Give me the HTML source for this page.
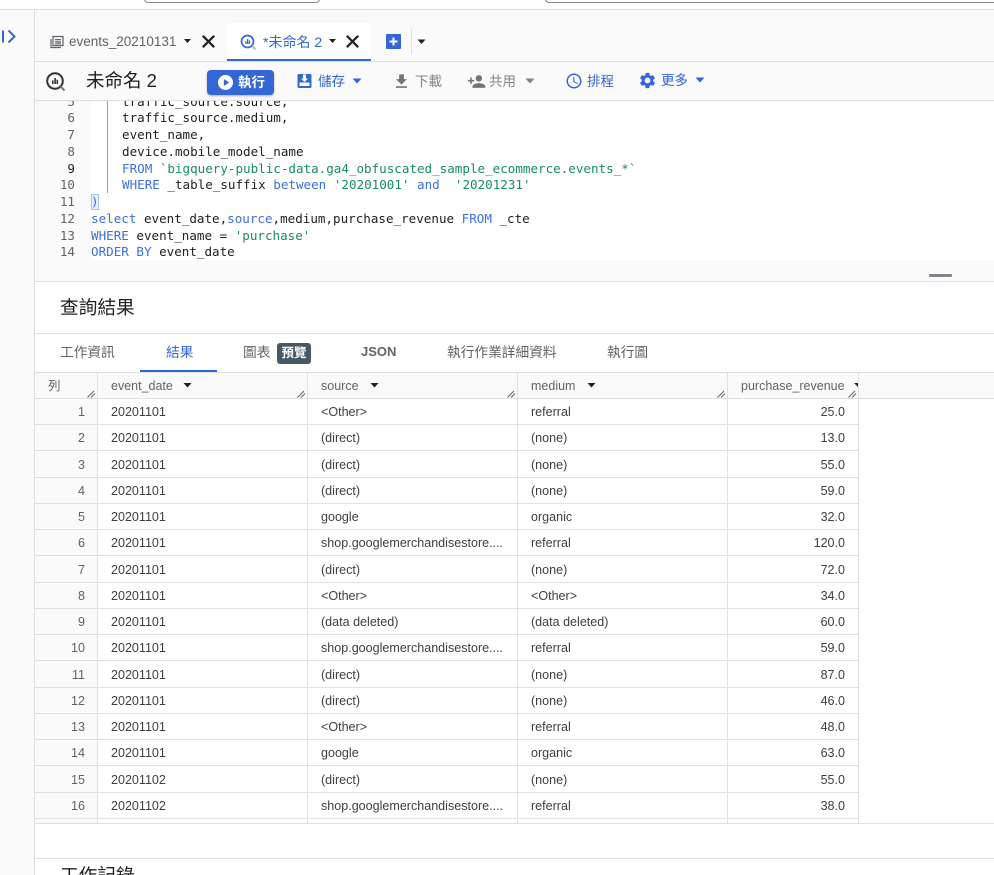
<!DOCTYPE html>
<html lang="zh-Hant"><head><meta charset="utf-8"><title>BigQuery</title>
<style>
*{box-sizing:border-box}
html,body{margin:0;padding:0;width:994px;height:875px;overflow:hidden;background:#fff}
body{position:relative;font-family:"Liberation Sans","Noto Sans CJK TC",sans-serif;color:#3c4043}
.a{position:absolute;white-space:nowrap}
.ln{position:absolute;background:#e0e0e0;height:1px}
.vl{position:absolute;background:#e0e0e0;width:1px}
svg{position:absolute;display:block}
.blue{color:#3367d6}.gray{color:#80868b}
.code{position:absolute;left:0;height:17px;line-height:17px;white-space:pre;font-family:"DejaVu Sans Mono","Liberation Mono",monospace;font-size:12.57px;color:#202124}
.n{position:absolute;left:35px;width:40px;text-align:right;height:17px;line-height:17px;font-family:"DejaVu Sans Mono","Liberation Mono",monospace;font-size:12.57px;color:#5f6368}
.k{color:#3b6fdc}.s{color:#188a6a}
.tb{font-size:13.5px;line-height:18px}
.r{position:absolute;left:35px;width:824px;height:27px;border-bottom:1px solid #e0e0e0;font-size:12.55px;color:#3c4043}
.r b{position:absolute;left:0;top:2px;width:63px;height:25px;font-weight:400;color:#5f6368;text-align:right;padding-right:13px;line-height:25px}
.r i{position:absolute;font-style:normal;top:2px;line-height:25px;white-space:nowrap}
.c1{left:76px}.c2{left:286px}.c3{left:496px}.c4{left:693px;width:117px;text-align:right}
.hd{font-size:12.5px;color:#5f6368;line-height:18px}
</style></head><body>

<!-- top strip -->
<div class="a" style="left:144px;top:-8px;width:176px;height:11px;border:1px solid #80868b;border-radius:4px;background:#fff"></div>
<div class="a" style="left:545px;top:-8px;width:460px;height:11px;border:1px solid #80868b;border-radius:4px;background:#fff"></div>
<div class="ln" style="left:0;top:9px;width:994px"></div>

<!-- sidebar -->
<div class="a" style="left:0;top:10px;width:34px;height:865px;background:#fafafa"></div>
<div class="vl" style="left:34px;top:10px;height:865px;background:#dadce0"></div>
<svg style="left:1px;top:29px" width="16" height="15" viewBox="0 0 16 15"><path d="M1 1.500h2v12H1z" fill="#3367d6"/><path d="M7.500 1.500l6 6-6 6" fill="none" stroke="#3367d6" stroke-width="2"/></svg>

<!-- tab bar -->
<div class="a" style="left:35px;top:10px;width:959px;height:51px;background:#fafafa"></div>
<div class="ln" style="left:35px;top:61px;width:959px"></div>
<svg style="left:50px;top:35px" width="14" height="14" viewBox="0 0 14 14"><path d="M3 1.500h10v9H3z" fill="none" stroke="#5f6368" stroke-width="1.200"/><path d="M1 4v8.500h10" fill="none" stroke="#5f6368" stroke-width="1.200"/><path d="M5 4h6v1.300H5zM5 6.300h6v1.300H5zM5 8.300h6v1H5z" fill="#5f6368"/></svg>
<div class="a" style="left:69px;top:33px;font-size:13.5px;line-height:18px;color:#5f6368">events_20210131</div>
<svg style="left:183px;top:38px" width="9" height="6"><path d="M1 1h7L4.500 5z" fill="#202124"/></svg>
<svg style="left:198px;top:31px" width="21" height="21" viewBox="0 0 24 24"><path d="M19 6.410L17.590 5 12 10.590 6.410 5 5 6.410 10.590 12 5 17.590 6.410 19 12 13.410 17.590 19 19 17.590 13.410 12z" fill="#202124" stroke="#202124" stroke-width=".6"/></svg>

<div class="a" style="left:227px;top:23px;width:144px;height:38px;background:#fff;border-radius:4px 4px 0 0;border-bottom:2px solid #3367d6"></div>
<svg style="left:240px;top:34px" width="17" height="17" viewBox="0 0 17 17"><circle cx="7.500" cy="7.500" r="6" fill="none" stroke="#3367d6" stroke-width="1.700"/><path d="M11.800 11.800l3.700 3.700" stroke="#9ab4ea" stroke-width="1.800"/><path d="M5.300 7h1.300v3H5.300zM7 5h1.300v5H7zM8.800 6.500h1.300V10H8.800z" fill="#3367d6"/></svg>
<div class="a blue" style="left:263px;top:33px;font-size:14px;line-height:19px">*未命名 2</div>
<svg style="left:328px;top:38px" width="9" height="6"><path d="M1 1h7L4.500 5z" fill="#202124"/></svg>
<svg style="left:342px;top:31px" width="21" height="21" viewBox="0 0 24 24"><path d="M19 6.410L17.590 5 12 10.590 6.410 5 5 6.410 10.590 12 5 17.590 6.410 19 12 13.410 17.590 19 19 17.590 13.410 12z" fill="#202124" stroke="#202124" stroke-width=".6"/></svg>
<div class="a" style="left:386px;top:34px;width:15px;height:15px;background:#3367d6;border-radius:1px"></div>
<svg style="left:386px;top:34px" width="15" height="15"><path d="M6.500 3.500h2v3h3v2h-3v3h-2v-3h-3v-2h3z" fill="#fff"/></svg>
<div class="vl" style="left:411px;top:29px;height:25px"></div>
<svg style="left:417px;top:39px" width="9" height="6"><path d="M0.500 0.500h8L4.500 5z" fill="#202124"/></svg>

<!-- toolbar -->
<div class="a" style="left:35px;top:62px;width:959px;height:38px;background:#fafafa"></div>
<div class="ln" style="left:35px;top:100px;width:959px;background:#dcdcdc"></div>
<svg style="left:45px;top:71px" width="21" height="21" viewBox="0 0 21 21"><circle cx="10" cy="10" r="7.800" fill="none" stroke="#303336" stroke-width="2"/><path d="M15.500 15.500l4 4" stroke="#777" stroke-width="2"/><path d="M7 9.500h1.600v3.500H7zM9.300 7h1.600v6H9.300zM11.500 8.800h1.600V13h-1.600z" fill="#303336"/></svg>
<div class="a" style="left:86px;top:68px;font-size:18.5px;line-height:25px;color:#202124">未命名 2</div>
<div class="a" style="left:207px;top:70px;width:67px;height:25px;background:#3367d6;border-radius:4px;box-shadow:0 1px 2px rgba(0,0,0,.3)"></div>
<svg style="left:218px;top:75px" width="15" height="15"><circle cx="7.500" cy="7.500" r="7.500" fill="#fff"/><path d="M5.800 4v7l5.400-3.500z" fill="#3367d6"/></svg>
<div class="a tb" style="left:238px;top:74px;color:#fff;font-weight:700">執行</div>
<svg style="left:297px;top:73px" width="15" height="16" viewBox="0 0 15 16"><path d="M2 1h11a1.500 1.500 0 011.500 1.500v11A1.500 1.500 0 0113 15H2a1.500 1.500 0 01-1.500-1.500v-11A1.500 1.500 0 012 1z" fill="#3367d6"/><path d="M2.500 9.500h10V13h-10z" fill="#fff"/><path d="M6 1.500h3v4h2l-3.500 3.500L4 5.500h2z" fill="#fff"/></svg>
<div class="a tb blue" style="left:318px;top:73px">儲存</div>
<svg style="left:352px;top:78px" width="10" height="6"><path d="M0.500 0.500h9L5 5.500z" fill="#3367d6"/></svg>
<svg style="left:392px;top:72px" width="19" height="19" viewBox="0 0 24 24"><path d="M19 9h-4V3H9v6H5l7 7 7-7zM5 18v2h14v-2H5z" fill="#757575"/></svg>
<div class="a tb" style="left:415px;top:73px;color:#80868b">下載</div>
<svg style="left:467px;top:72px" width="19" height="19" viewBox="0 0 24 24"><path d="M15 12c2.210 0 4-1.790 4-4s-1.790-4-4-4-4 1.790-4 4 1.790 4 4 4zm-9-2V7H4v3H1v2h3v3h2v-3h3v-2H6zm9 4c-2.670 0-8 1.340-8 4v2h16v-2c0-2.660-5.330-4-8-4z" fill="#757575"/></svg>
<div class="a tb" style="left:489px;top:73px;color:#80868b">共用</div>
<svg style="left:525px;top:78px" width="10" height="6"><path d="M0.500 0.500h9L5 5.500z" fill="#80868b"/></svg>
<svg style="left:565px;top:72px" width="18" height="18" viewBox="0 0 24 24"><path d="M11.990 2C6.470 2 2 6.480 2 12s4.470 10 9.990 10C17.520 22 22 17.520 22 12S17.520 2 11.990 2zM12 20c-4.420 0-8-3.580-8-8s3.580-8 8-8 8 3.580 8 8-3.580 8-8 8zm.5-13H11v6l5.250 3.150.75-1.230-4.500-2.670z" fill="#3367d6"/></svg>
<div class="a tb blue" style="left:587px;top:73px">排程</div>
<svg style="left:638px;top:71px" width="19" height="19" viewBox="0 0 24 24"><path d="M19.140 12.940c.04-.3.060-.61.060-.94 0-.32-.02-.64-.07-.94l2.030-1.580c.18-.14.23-.41.12-.61l-1.920-3.320c-.12-.22-.37-.29-.59-.22l-2.390.96c-.5-.38-1.030-.7-1.620-.94l-.36-2.540c-.04-.24-.24-.41-.48-.41h-3.840c-.24 0-.43.17-.47.41l-.36 2.540c-.59.24-1.130.57-1.620.94l-2.390-.96c-.22-.08-.47 0-.59.22L2.740 8.870c-.12.21-.08.47.12.61l2.030 1.580c-.05.3-.09.63-.09.94s.02.64.07.94l-2.030 1.580c-.18.14-.23.41-.12.61l1.920 3.320c.12.22.37.29.59.22l2.390-.96c.5.38 1.030.7 1.620.94l.36 2.540c.05.24.24.41.48.41h3.840c.24 0 .44-.17.47-.41l.36-2.540c.59-.24 1.130-.56 1.620-.94l2.390.96c.22.08.47 0 .59-.22l1.920-3.320c.12-.22.07-.47-.12-.61l-2.010-1.580zM12 15.600c-1.980 0-3.600-1.620-3.600-3.600s1.620-3.600 3.600-3.600 3.600 1.620 3.600 3.600-1.620 3.600-3.600 3.600z" fill="#3367d6"/></svg>
<div class="a tb blue" style="left:661px;top:72px">更多</div>
<svg style="left:695px;top:77px" width="10" height="6"><path d="M0.500 0.500h9L5 5.500z" fill="#3367d6"/></svg>

<!-- editor -->
<div class="a" style="left:35px;top:101px;width:56px;height:159px;background:#fafafa"></div>
<div class="a" style="left:35px;top:260px;width:959px;height:21px;background:#fafafa"></div>
<div class="a" style="left:35px;top:101px;width:959px;height:159px;overflow:hidden">
  <div class="n" style="left:0;top:-8px">5</div>
  <div class="n" style="left:0;top:8px">6</div>
  <div class="n" style="left:0;top:25px">7</div>
  <div class="n" style="left:0;top:42px">8</div>
  <div class="n" style="left:0;top:59px;color:#202124">9</div>
  <div class="n" style="left:0;top:75px">10</div>
  <div class="n" style="left:0;top:92px">11</div>
  <div class="n" style="left:0;top:109px">12</div>
  <div class="n" style="left:0;top:126px">13</div>
  <div class="n" style="left:0;top:142px">14</div>
  <div class="a" style="left:72px;top:0;width:1px;height:92px;background:#9e9e9e"></div>
  <div class="a" style="left:56px;top:93px;width:8px;height:16px;background:#e8f0fe;border:1px solid #a8c4f5"></div>
  <div class="code" style="left:87px;top:-8px">traffic_source.source,</div>
  <div class="code" style="left:87px;top:8px">traffic_source.medium,</div>
  <div class="code" style="left:87px;top:25px">event_name,</div>
  <div class="code" style="left:87px;top:42px">device.mobile_model_name</div>
  <div class="code" style="left:87px;top:59px"><span class="k">FROM</span> <span class="s">`bigquery-public-data.ga4_obfuscated_sample_ecommerce.events_*`</span></div>
  <div class="code" style="left:87px;top:75px"><span class="k">WHERE</span> _table_suffix <span class="k">between</span> <span class="s">'20201001'</span> <span class="k">and</span>  <span class="s">'20201231'</span></div>
  <div class="code k" style="left:56px;top:92px">)</div>
  <div class="code" style="left:56px;top:109px"><span class="k">select</span> event_date,<span class="k">source</span>,medium,purchase_revenue <span class="k">FROM</span> _cte</div>
  <div class="code" style="left:56px;top:126px"><span class="k">WHERE</span> event_name = <span class="s">'purchase'</span></div>
  <div class="code" style="left:56px;top:142px"><span class="k">ORDER BY</span> event_date</div>
</div>
<div class="a" style="left:929px;top:274px;width:23px;height:3px;background:#80868b;border-radius:1px"></div>
<div class="ln" style="left:35px;top:281px;width:959px"></div>

<!-- results title -->
<div class="a" style="left:60px;top:295px;font-size:18.700px;line-height:26px;color:#202124">查詢結果</div>
<div class="ln" style="left:35px;top:333px;width:959px"></div>

<!-- results tabs -->
<div class="a tb" style="left:60px;top:344px;font-size:13.700px;color:#5f6368">工作資訊</div>
<div class="a tb blue" style="left:166px;top:344px;font-size:13.700px">結果</div>
<div class="a" style="left:140px;top:370px;width:77px;height:2px;background:#3367d6"></div>
<div class="a tb" style="left:243px;top:344px;font-size:13.700px;color:#5f6368">圖表</div>
<div class="a" style="left:277px;top:343px;width:34px;height:21px;background:#455a64;border-radius:3px;color:#fff;font-size:12.500px;line-height:21px;text-align:center;font-weight:700">預覽</div>
<div class="a" style="left:361px;top:343px;font-size:13px;line-height:18px;color:#5f6368;font-weight:700">JSON</div>
<div class="a tb" style="left:447px;top:344px;font-size:13.700px;color:#5f6368">執行作業詳細資料</div>
<div class="a tb" style="left:607px;top:344px;font-size:13.700px;color:#5f6368">執行圖</div>
<div class="ln" style="left:35px;top:372px;width:959px"></div>

<!-- table header -->
<div class="a" style="left:35px;top:373px;width:959px;height:25px;background:#fafafa"></div>
<div class="a" style="left:35px;top:399px;width:62px;height:424px;background:#fafafa"></div>
<div class="ln" style="left:35px;top:398px;width:959px"></div>
<div class="a hd" style="left:48px;top:377px">列</div>
<div class="a hd" style="left:111px;top:377px">event_date</div>
<svg style="left:183px;top:383px" width="9" height="5"><path d="M0.500 0h8L4.500 4.500z" fill="#202124"/></svg>
<div class="a hd" style="left:321px;top:377px">source</div>
<svg style="left:370px;top:383px" width="9" height="5"><path d="M0.500 0h8L4.500 4.500z" fill="#202124"/></svg>
<div class="a hd" style="left:531px;top:377px">medium</div>
<svg style="left:587px;top:383px" width="9" height="5"><path d="M0.500 0h8L4.500 4.500z" fill="#202124"/></svg>
<div class="a hd" style="left:741px;top:377px">purchase_revenue</div>
<svg style="left:854px;top:383px" width="4" height="4"><path d="M0 0h4v4z" fill="#202124"/></svg>
<svg style="left:87px;top:390px" width="9" height="8"><path d="M0.500 7.500L7 1M4 7.500L8 3.500" stroke="#5f6368" stroke-width="1"/></svg>
<svg style="left:297px;top:390px" width="9" height="8"><path d="M0.500 7.500L7 1M4 7.500L8 3.500" stroke="#5f6368" stroke-width="1"/></svg>
<svg style="left:507px;top:390px" width="9" height="8"><path d="M0.500 7.500L7 1M4 7.500L8 3.500" stroke="#5f6368" stroke-width="1"/></svg>
<svg style="left:717px;top:390px" width="9" height="8"><path d="M0.500 7.500L7 1M4 7.500L8 3.500" stroke="#5f6368" stroke-width="1"/></svg>
<svg style="left:848px;top:390px" width="9" height="8"><path d="M0.500 7.500L7 1M4 7.500L8 3.500" stroke="#5f6368" stroke-width="1"/></svg>

<!-- table rows -->
<div class="r" style="top:398px"><b>1</b><i class="c1">20201101</i><i class="c2">&lt;Other&gt;</i><i class="c3">referral</i><i class="c4">25.0</i></div>
<div class="r" style="top:424px"><b>2</b><i class="c1">20201101</i><i class="c2">(direct)</i><i class="c3">(none)</i><i class="c4">13.0</i></div>
<div class="r" style="top:451px"><b>3</b><i class="c1">20201101</i><i class="c2">(direct)</i><i class="c3">(none)</i><i class="c4">55.0</i></div>
<div class="r" style="top:477px"><b>4</b><i class="c1">20201101</i><i class="c2">(direct)</i><i class="c3">(none)</i><i class="c4">59.0</i></div>
<div class="r" style="top:503px"><b>5</b><i class="c1">20201101</i><i class="c2">google</i><i class="c3">organic</i><i class="c4">32.0</i></div>
<div class="r" style="top:529px"><b>6</b><i class="c1">20201101</i><i class="c2">shop.googlemerchandisestore....</i><i class="c3">referral</i><i class="c4">120.0</i></div>
<div class="r" style="top:556px"><b>7</b><i class="c1">20201101</i><i class="c2">(direct)</i><i class="c3">(none)</i><i class="c4">72.0</i></div>
<div class="r" style="top:582px"><b>8</b><i class="c1">20201101</i><i class="c2">&lt;Other&gt;</i><i class="c3">&lt;Other&gt;</i><i class="c4">34.0</i></div>
<div class="r" style="top:608px"><b>9</b><i class="c1">20201101</i><i class="c2">(data deleted)</i><i class="c3">(data deleted)</i><i class="c4">60.0</i></div>
<div class="r" style="top:634px"><b>10</b><i class="c1">20201101</i><i class="c2">shop.googlemerchandisestore....</i><i class="c3">referral</i><i class="c4">59.0</i></div>
<div class="r" style="top:661px"><b>11</b><i class="c1">20201101</i><i class="c2">(direct)</i><i class="c3">(none)</i><i class="c4">87.0</i></div>
<div class="r" style="top:687px"><b>12</b><i class="c1">20201101</i><i class="c2">(direct)</i><i class="c3">(none)</i><i class="c4">46.0</i></div>
<div class="r" style="top:713px"><b>13</b><i class="c1">20201101</i><i class="c2">&lt;Other&gt;</i><i class="c3">referral</i><i class="c4">48.0</i></div>
<div class="r" style="top:739px"><b>14</b><i class="c1">20201101</i><i class="c2">google</i><i class="c3">organic</i><i class="c4">63.0</i></div>
<div class="r" style="top:766px"><b>15</b><i class="c1">20201102</i><i class="c2">(direct)</i><i class="c3">(none)</i><i class="c4">55.0</i></div>
<div class="r" style="top:792px"><b>16</b><i class="c1">20201102</i><i class="c2">shop.googlemerchandisestore....</i><i class="c3">referral</i><i class="c4">38.0</i></div>

<!-- column lines -->
<div class="vl" style="left:97px;top:373px;height:450px"></div>
<div class="vl" style="left:307px;top:373px;height:450px"></div>
<div class="vl" style="left:517px;top:373px;height:450px"></div>
<div class="vl" style="left:727px;top:373px;height:450px"></div>
<div class="vl" style="left:858px;top:373px;height:450px"></div>

<!-- bottom -->
<div class="ln" style="left:35px;top:823px;width:959px"></div>
<div class="ln" style="left:35px;top:858px;width:959px"></div>
<div class="a" style="left:60px;top:863px;font-size:18.700px;line-height:26px;color:#202124">工作記錄</div>
</body></html>
